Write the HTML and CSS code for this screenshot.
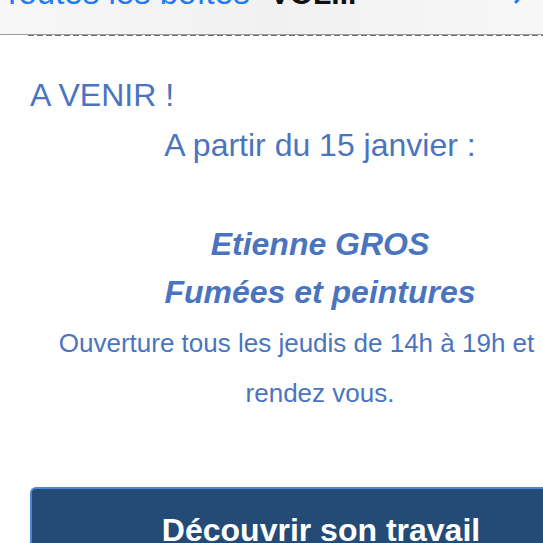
FILE: index.html
```html
<!DOCTYPE html>
<html lang="fr">
<head>
    <meta charset="UTF-8">
    <meta name="viewport" content="width=device-width, initial-scale=1.0">
    <title>A venir - Etienne Gros</title>
    <link rel="stylesheet" href="styles.css">
</head>
<body>
    <header class="nav-bar">
        <div class="nav-row">
            <span class="nav-back">Toutes les boîtes</span>
            <span class="nav-title">VOL...</span>
        </div>
        <svg class="nav-next" width="14" height="24" viewBox="0 0 14 24">
            <path d="M2 2 L11 12 L2 22" fill="none" stroke="#1f7af5" stroke-width="3" stroke-linecap="round" stroke-linejoin="round"/>
        </svg>
    </header>
    <div class="divider"></div>

    <main class="content">
        <p class="upcoming">A VENIR !</p>
        <p class="date">A partir du 15 janvier :</p>

        <p class="artist">Etienne GROS</p>
        <p class="artist">Fumées et peintures</p>

        <p class="hours">
            <span class="hours-line first">Ouverture tous les jeudis de 14h à 19h et</span>
            <span class="hours-line">rendez vous.</span>
        </p>

        <a class="discover" href="#">Découvrir son travail</a>
    </main>
</body>
</html>
```

FILE: styles.css
```css
html, body { margin: 0; padding: 0; }
body { font-family: "Liberation Sans", Arial, sans-serif; background: #fff; overflow: hidden; width: 543px; height: 543px; }

/* top bar, scrolled mostly out of view */
.nav-bar { display: flow-root; position: relative; height: 34px; background: linear-gradient(to right, #f7f7f7, #f1f1f1 50%, #f7f7f7); border-bottom: 1px solid #9c9c9c; }
.nav-row { display: flex; align-items: baseline; margin-top: -23px; padding-left: 2px; }
.nav-back { font-size: 33px; line-height: 32px; color: #1f7af5; }
.nav-title { font-size: 30px; line-height: 32px; font-weight: bold; color: #111; margin-left: 20px; }
.nav-next { position: absolute; left: 514px; top: -20px; }
.divider { height: 1px; margin-left: 28px; background: repeating-linear-gradient(to right, #6f6f6f 0 6px, transparent 6px 9px); }

.content { width: 580px; padding-left: 30px; color: #4b74bf; }
.content p { margin: 0; }

.upcoming { font-size: 32px; line-height: 50px; margin-top: 34px !important; }
.date { font-size: 32px; line-height: 50px; text-align: center; margin-bottom: 50px !important; }
.artist { font-size: 32px; line-height: 48px; font-weight: bold; font-style: italic; text-align: center; }
.hours { font-size: 26px; line-height: 50px; text-align: center; margin-top: 2px !important; }
.hours-line { display: block; }
.hours-line.first { padding-right: 47px; }

.discover { display: block; margin-top: 69px; padding: 21px 0 20px; border: 2px solid #4a87d6; border-right: none; border-bottom: none; border-radius: 6px 0 0 0; background: #244b76; color: #fff; font-size: 32px; line-height: 40px; font-weight: bold; text-align: center; text-decoration: none; }
```
